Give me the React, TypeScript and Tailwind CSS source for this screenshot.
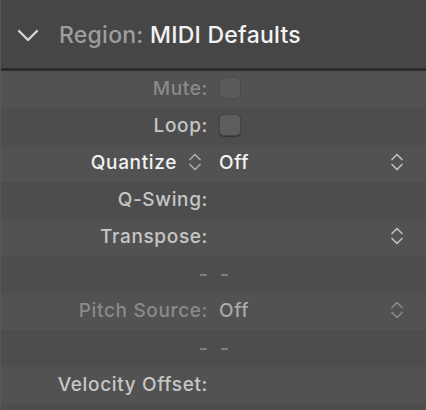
import React from 'react';

const font = { fontFamily: 'Inter, "Liberation Sans", sans-serif' };

function Stepper({ className = '' }: { className?: string }) {
  return (
    <svg width="14" height="22" viewBox="0 0 14 22" className={className} fill="none" stroke="currentColor" strokeWidth="1.7" strokeLinecap="round" strokeLinejoin="round">
      <path d="M2 8.5 L7 3.5 L12 8.5" />
      <path d="M2 13.5 L7 18.5 L12 13.5" />
    </svg>
  );
}

function Checkbox({ dim }: { dim?: boolean }) {
  return (
    <div
      className={`w-[22px] h-[22px] rounded-[5px] border ${
        dim ? 'bg-[#5a5a5a] border-[#4a4a4a]' : 'bg-[#5e5e5e] border-[#444444] shadow-[0_1px_1px_rgba(0,0,0,0.35)]'
      }`}
    />
  );
}

type Row = {
  label?: React.ReactNode;
  labelColor?: string;
  value?: React.ReactNode;
  stepper?: 'bright' | 'dim';
};

function Dashes() {
  return (
    <div className="flex gap-[14px] pl-[199px] items-center">
      <span className="w-[7px] h-[2px] bg-[#7d7d7d]" />
      <span className="w-[7px] h-[2px] bg-[#7d7d7d]" />
    </div>
  );
}

export default function App() {
  const rows: (Row | 'dash' | 'empty')[] = [
    { label: 'Mute:', labelColor: 'text-[#8a8a8a]', value: <Checkbox dim /> },
    { label: 'Loop:', labelColor: 'text-[#c6c6c6]', value: <Checkbox /> },
    {
      label: (
        <span className="flex items-center gap-[11px] mr-[6px]">
          <span className="text-[#f2f2f2]">Quantize</span>
          <Stepper className="text-[#a9a9a9]" />
        </span>
      ),
      value: <span className="text-[#f2f2f2]">Off</span>,
      stepper: 'bright',
    },
    { label: 'Q-Swing:', labelColor: 'text-[#c6c6c6]' },
    { label: 'Transpose:', labelColor: 'text-[#c6c6c6]', stepper: 'bright' },
    'dash',
    {
      label: 'Pitch Source:',
      labelColor: 'text-[#8a8a8a]',
      value: <span className="text-[#a9a9a9]">Off</span>,
      stepper: 'dim',
    },
    'dash',
    { label: 'Velocity Offset:', labelColor: 'text-[#c6c6c6]' },
    'empty',
  ];

  return (
    <div className="w-[426px] h-[410px] overflow-hidden bg-[#4e4e4e] border-l border-[#575757]" style={font}>
      <div className="h-[68px] bg-[#464646] flex items-center pl-[16px] pt-[3px]">
        <svg width="22" height="14" viewBox="0 0 22 14" fill="none" stroke="#d4d4d4" strokeWidth="2.4" strokeLinecap="round" strokeLinejoin="round">
          <path d="M2 2 L11 11 L20 2" />
        </svg>
        <div className="ml-[20px] text-[23px] font-medium tracking-[0.25px] leading-none">
          <span className="text-[#9d9d9d]">Region: </span>
          <span className="text-[#f3f3f3]">MIDI Defaults</span>
        </div>
      </div>
      <div className="h-[3px] bg-[#2b2b2b]" />
      {rows.map((r, i) => {
        const bg = i % 2 === 0 ? 'bg-[#525252]' : 'bg-[#4d4d4d]';
        if (r === 'dash') return <div key={i} className={`h-[37px] flex items-center ${bg}`}><Dashes /></div>;
        if (r === 'empty') return <div key={i} className={`h-[37px] ${bg}`} />;
        return (
          <div key={i} className={`h-[37px] flex items-center text-[19px] font-medium tracking-[0.65px] leading-none pb-[3px] ${bg}`}>
            <div className={`w-[207px] flex justify-end ${r.labelColor ?? ''}`}>{r.label}</div>
            <div className="flex-1 pl-[11px] flex items-center">{r.value}</div>
            <div className="w-[14px] mr-[22px]">
              {r.stepper && <Stepper className={r.stepper === 'bright' ? 'text-[#bdbdbd]' : 'text-[#8a8a8a]'} />}
            </div>
          </div>
        );
      })}
    </div>
  );
}
